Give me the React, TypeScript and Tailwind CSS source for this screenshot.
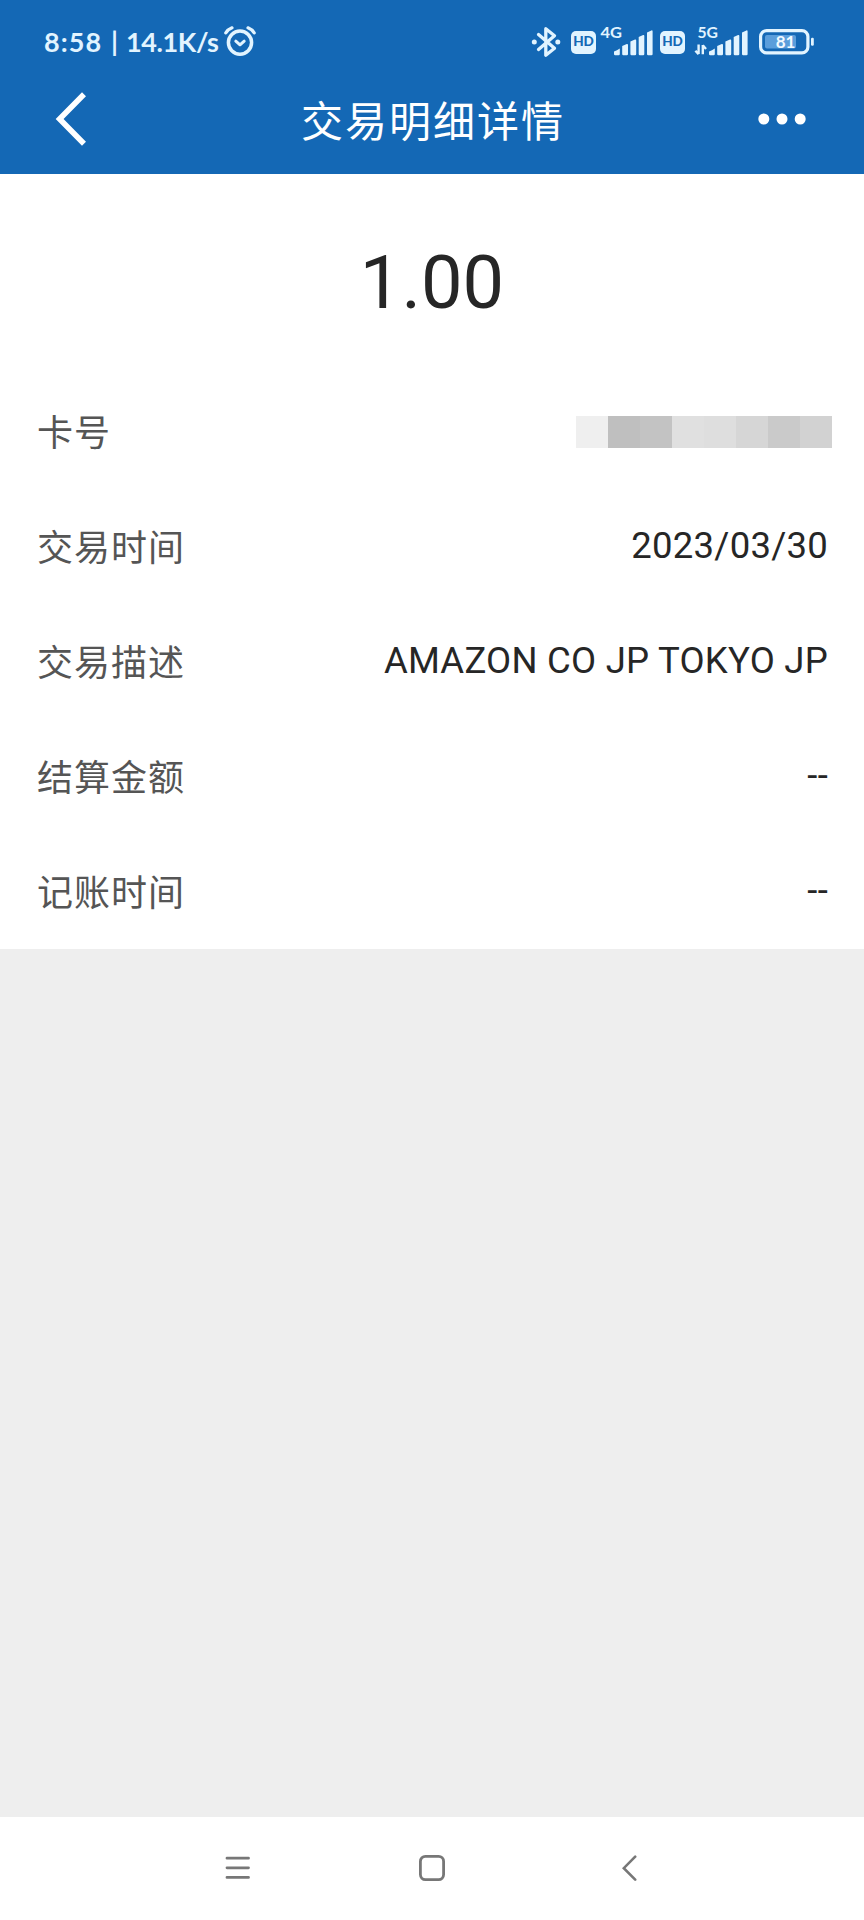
interface DetailRow {
  label: string;
  value?: string;
}

const ROWS: DetailRow[] = [
  { label: "卡号" },
  { label: "交易时间", value: "2023/03/30" },
  { label: "交易描述", value: "AMAZON CO JP TOKYO JP" },
  { label: "结算金额", value: "--" },
  { label: "记账时间", value: "--" },
];

const AlarmIcon = () => (
  <svg width="32" height="32" viewBox="0 0 32 32" fill="none" stroke="currentColor" strokeLinecap="round" strokeLinejoin="round">
    <circle cx="16" cy="16.6" r="11.6" strokeWidth="3.5" />
    <path d="M11.8 15.2l4.2 3.6 4.2-3.6" strokeWidth="3" />
    <path d="M1.8 6.8Q4 3.4 8 1.8M30.2 6.8Q28 3.4 24 1.8" strokeWidth="3.2" />
  </svg>
);

const BluetoothIcon = () => (
  <svg width="30" height="32" viewBox="0 0 30 32" fill="none" stroke="currentColor" strokeLinecap="round" strokeLinejoin="round">
    <path d="M7.5 8.5L23.5 22.3 14.8 29.3V2.7L23.5 9.7 7.5 23.5" strokeWidth="3.3" />
    <circle cx="3.3" cy="16" r="2.5" fill="currentColor" stroke="none" />
    <circle cx="26.8" cy="16" r="2.5" fill="currentColor" stroke="none" />
  </svg>
);

const HdBadge = () => (
  <span className="flex h-[23px] w-[25px] items-center justify-center rounded-[5px] bg-[#e2f4ff] text-[13.5px] leading-none font-black text-[#1468b5]">
    HD
  </span>
);

const Signal = ({ label, hasData = false }: { label: string; hasData?: boolean }) => (
  <svg width="58" height="40" viewBox="0 -4 58 40" fill="currentColor">
    <text x={hasData ? 6.5 : 4.5} y="12.4" fontSize="16" fontWeight="700" textLength={hasData ? 20.5 : 21.5} lengthAdjust="spacingAndGlyphs">
      {label}
    </text>
    {hasData && (
      <path d="M7.6 18.6v9.3M7.6 28.3L4.4 24.8M11.8 28.3V19M11.8 19.2l3.2 3.8" fill="none" stroke="currentColor" strokeWidth="2.4" />
    )}
    <path d="M18 28v-2.4q3-1 5.8-3V28q0 1.2-1.2 1.2h-3.4Q18 29.2 18 28z" />
    <path d="M26.2 28v-8l4.6-2q1.2-.4 1.2 1v9q0 1.2-1.2 1.2h-3.4q-1.2 0-1.2-1.2z" />
    <path d="M34.4 28V15.6l4.6-2q1.2-.4 1.2 1V28q0 1.2-1.2 1.2h-3.4q-1.2 0-1.2-1.2z" />
    <path d="M42.7 28V11l4.4-2q1.2-.4 1.2 1v18q0 1.2-1.2 1.2h-3.2q-1.2 0-1.2-1.2z" />
    <path d="M51 28V6.4l4.4-2q1.2-.4 1.2 1V28q0 1.2-1.2 1.2h-3.2Q51 29.2 51 28z" />
  </svg>
);

const BatteryIcon = () => (
  <svg width="56" height="26" viewBox="0 0 56 26">
    <rect x="1.6" y="1.6" width="47.3" height="22.3" rx="6" fill="none" stroke="currentColor" strokeWidth="3.2" />
    <rect x="6" y="6" width="31" height="13.5" rx="2" fill="#5b9edb" />
    <rect x="52" y="8.7" width="2.8" height="8" rx="1.2" fill="currentColor" />
    <text x="26.5" y="18.8" fontSize="17" fontWeight="700" textAnchor="middle" fill="#f2faff">
      81
    </text>
  </svg>
);

const StatusBar = () => (
  <div className="flex h-[84px] items-center pl-[44px] font-['Lato','Noto_Sans_CJK_SC',sans-serif] text-[#e2f4ff]">
    <div className="flex w-[180px] pb-[2px] text-[27px] leading-none font-bold">
      <span className="w-[67px] tracking-[1.1px]">8:58</span>
      <span className="w-[15px]">|</span>
      <span className="tracking-[-0.4px]">14.1K/s</span>
    </div>
    <AlarmIcon />
    <div className="ml-auto flex items-center pr-[49px]">
      <BluetoothIcon />
      <div className="ml-[10px]">
        <HdBadge />
      </div>
      <Signal label="4G" />
      <div className="ml-[6px]">
        <HdBadge />
      </div>
      <div className="ml-[6px]">
        <Signal label="5G" hasData />
      </div>
      <div className="ml-[10px]">
        <BatteryIcon />
      </div>
    </div>
  </div>
);

const TitleBar = () => (
  <div className="grid h-[90px] grid-cols-[1fr_auto_1fr] items-start pr-[57px] pl-[54px] text-white">
    <svg width="36" height="56" viewBox="0 0 36 56" className="mt-[7px]" fill="none" stroke="currentColor" strokeWidth="5.6">
      <path d="M30 3.2L5.6 28 30 52.8" />
    </svg>
    <h1 className="mt-[10px] pl-[5px] text-[42px] leading-[58px] font-normal tracking-[2px]">交易明细详情</h1>
    <svg width="50" height="12" viewBox="0 0 50 12" className="mt-[29px] justify-self-end" fill="currentColor">
      <circle cx="6.8" cy="6" r="5.5" />
      <circle cx="25" cy="6" r="5.5" />
      <circle cx="43.2" cy="6" r="5.5" />
    </svg>
  </div>
);

// Card number covered by a mosaic
const MaskedCard = () => (
  <div className="-mr-[4px] flex h-8">
    <div className="w-8 bg-[#efefef]" />
    <div className="w-8 bg-[#bfbfbf]" />
    <div className="w-8 bg-[#c3c3c3]" />
    <div className="w-8 bg-[#e0e0e0]" />
    <div className="w-8 bg-[#dedede]" />
    <div className="w-8 bg-[#d6d6d6]" />
    <div className="w-8 bg-[#cacaca]" />
    <div className="w-8 bg-[#d2d2d2]" />
  </div>
);

const App = () => {
  return (
    <div className="flex h-[1920px] w-[864px] flex-col bg-[#eeeeee] font-['Roboto','Noto_Sans_CJK_SC',sans-serif]">
      <header className="bg-[#1468b5]">
        <StatusBar />
        <TitleBar />
      </header>

      <main className="h-[775px] bg-white">
        <div className="flex h-[200px] items-center justify-center pt-[18px] text-[74px] leading-none text-[#262626]">1.00</div>
        {ROWS.map((row) => (
          <div key={row.label} className="flex h-[115px] items-center justify-between pr-[36px] pl-[37px]">
            <span className="pt-[4px] text-[36px] leading-[52px] tracking-[1px] text-[#555555]">{row.label}</span>
            {row.value ? (
              <span className="pb-[2px] text-[36.5px] leading-[52px] tracking-[0.25px] text-[#262626]">{row.value}</span>
            ) : (
              <MaskedCard />
            )}
          </div>
        ))}
      </main>

      <nav className="mt-auto grid h-[103px] grid-cols-[194px_203px_16px] items-center bg-white pb-[2px] pl-[225px] text-[#777777]">
        <svg width="26" height="26" viewBox="0 0 26 26" fill="none" stroke="currentColor" strokeWidth="2.8" strokeLinecap="round">
          <path d="M2 3.2h21.5M2 12.8h21.5M2 22.4h21.5" />
        </svg>
        <svg width="28" height="28" viewBox="0 0 28 28" fill="none" stroke="currentColor" strokeWidth="2.8">
          <rect x="1.4" y="2.4" width="23.2" height="23.2" rx="5" />
        </svg>
        <svg width="16" height="28" viewBox="0 0 16 28" fill="none" stroke="currentColor" strokeWidth="2.6" strokeLinecap="round">
          <path d="M13.2 2.7L1.8 14.2l11.4 11.5" />
        </svg>
      </nav>
    </div>
  );
};

export default App;
